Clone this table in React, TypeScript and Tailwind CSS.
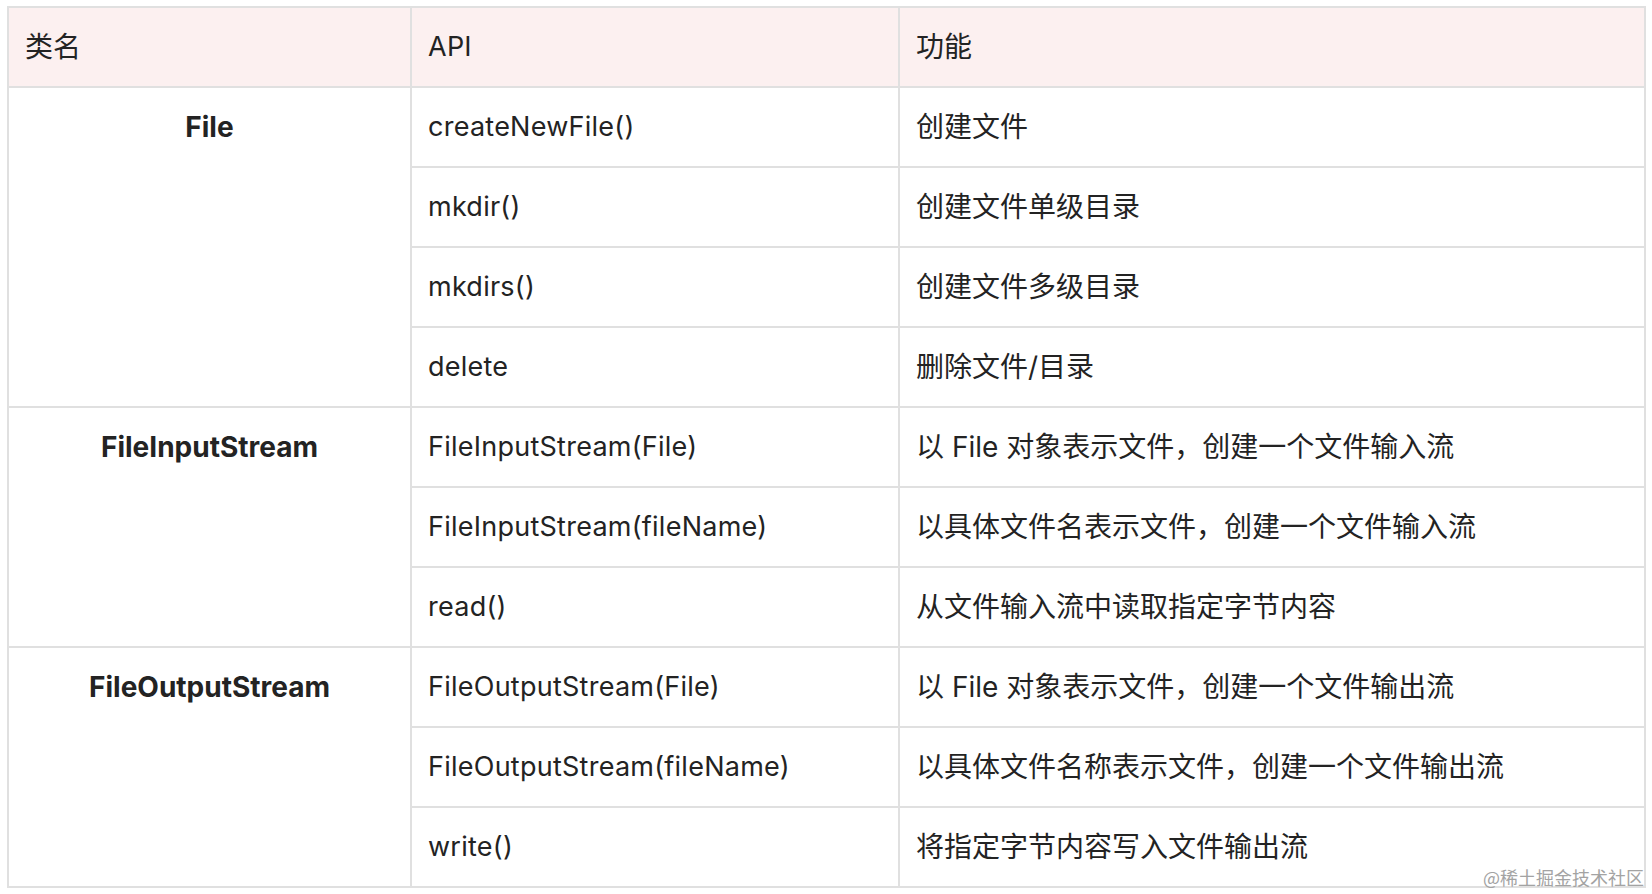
const rows = [
  {
    name: "File",
    items: [
      ["createNewFile()", "创建文件"],
      ["mkdir()", "创建文件单级目录"],
      ["mkdirs()", "创建文件多级目录"],
      ["delete", "删除文件/目录"],
    ],
  },
  {
    name: "FileInputStream",
    items: [
      ["FileInputStream(File)", "以 File 对象表示文件，创建一个文件输入流"],
      ["FileInputStream(fileName)", "以具体文件名表示文件，创建一个文件输入流"],
      ["read()", "从文件输入流中读取指定字节内容"],
    ],
  },
  {
    name: "FileOutputStream",
    items: [
      ["FileOutputStream(File)", "以 File 对象表示文件，创建一个文件输出流"],
      ["FileOutputStream(fileName)", "以具体文件名称表示文件，创建一个文件输出流"],
      ["write()", "将指定字节内容写入文件输出流"],
    ],
  },
];

const cell =
  "h-[80px] border-r-2 border-b-2 border-[#e0e0e0] p-0 pl-[16px] align-middle text-left font-normal";

export default function App() {
  return (
    <div
      className="relative w-[1652px] h-[894px] bg-white text-[#232323] text-[27px]"
      style={{ fontFamily: '"Inter", "Noto Sans CJK SC", sans-serif' }}
    >
      <div className="pt-[6px] pl-[7px]">
        <table className="w-[1639px] table-fixed border-separate border-spacing-0 border-l-2 border-t-2 border-[#e0e0e0]">
          <colgroup>
            <col className="w-[403px]" />
            <col className="w-[488px]" />
            <col className="w-[746px]" />
          </colgroup>
          <thead>
            <tr className="bg-[#fcf0f0]">
              <th className={cell + " text-[28px]"}>类名</th>
              <th className={cell + " tracking-[0.25px]"}>API</th>
              <th className={cell + " text-[28px]"}>功能</th>
            </tr>
          </thead>
          <tbody>
            {rows.map((group) =>
              group.items.map((item, i) => (
                <tr key={group.name + i}>
                  {i === 0 && (
                    <td
                      rowSpan={group.items.length}
                      className="border-r-2 border-b-2 border-[#e0e0e0] p-0 align-top"
                    >
                      <div className="h-[78px] flex items-center justify-center text-[28px] font-bold">
                        {group.name}
                      </div>
                    </td>
                  )}
                  <td className={cell + " tracking-[0.25px]"}>{item[0]}</td>
                  <td className={cell + " text-[28px]"}>{item[1]}</td>
                </tr>
              ))
            )}
          </tbody>
        </table>
      </div>
      <div
        className="absolute right-[8px] bottom-[8px] text-[18px] leading-none text-[#a3a3a3]"
        style={{ fontFamily: '"Noto Sans CJK SC", sans-serif' }}
      >
        @稀土掘金技术社区
      </div>
    </div>
  );
}
